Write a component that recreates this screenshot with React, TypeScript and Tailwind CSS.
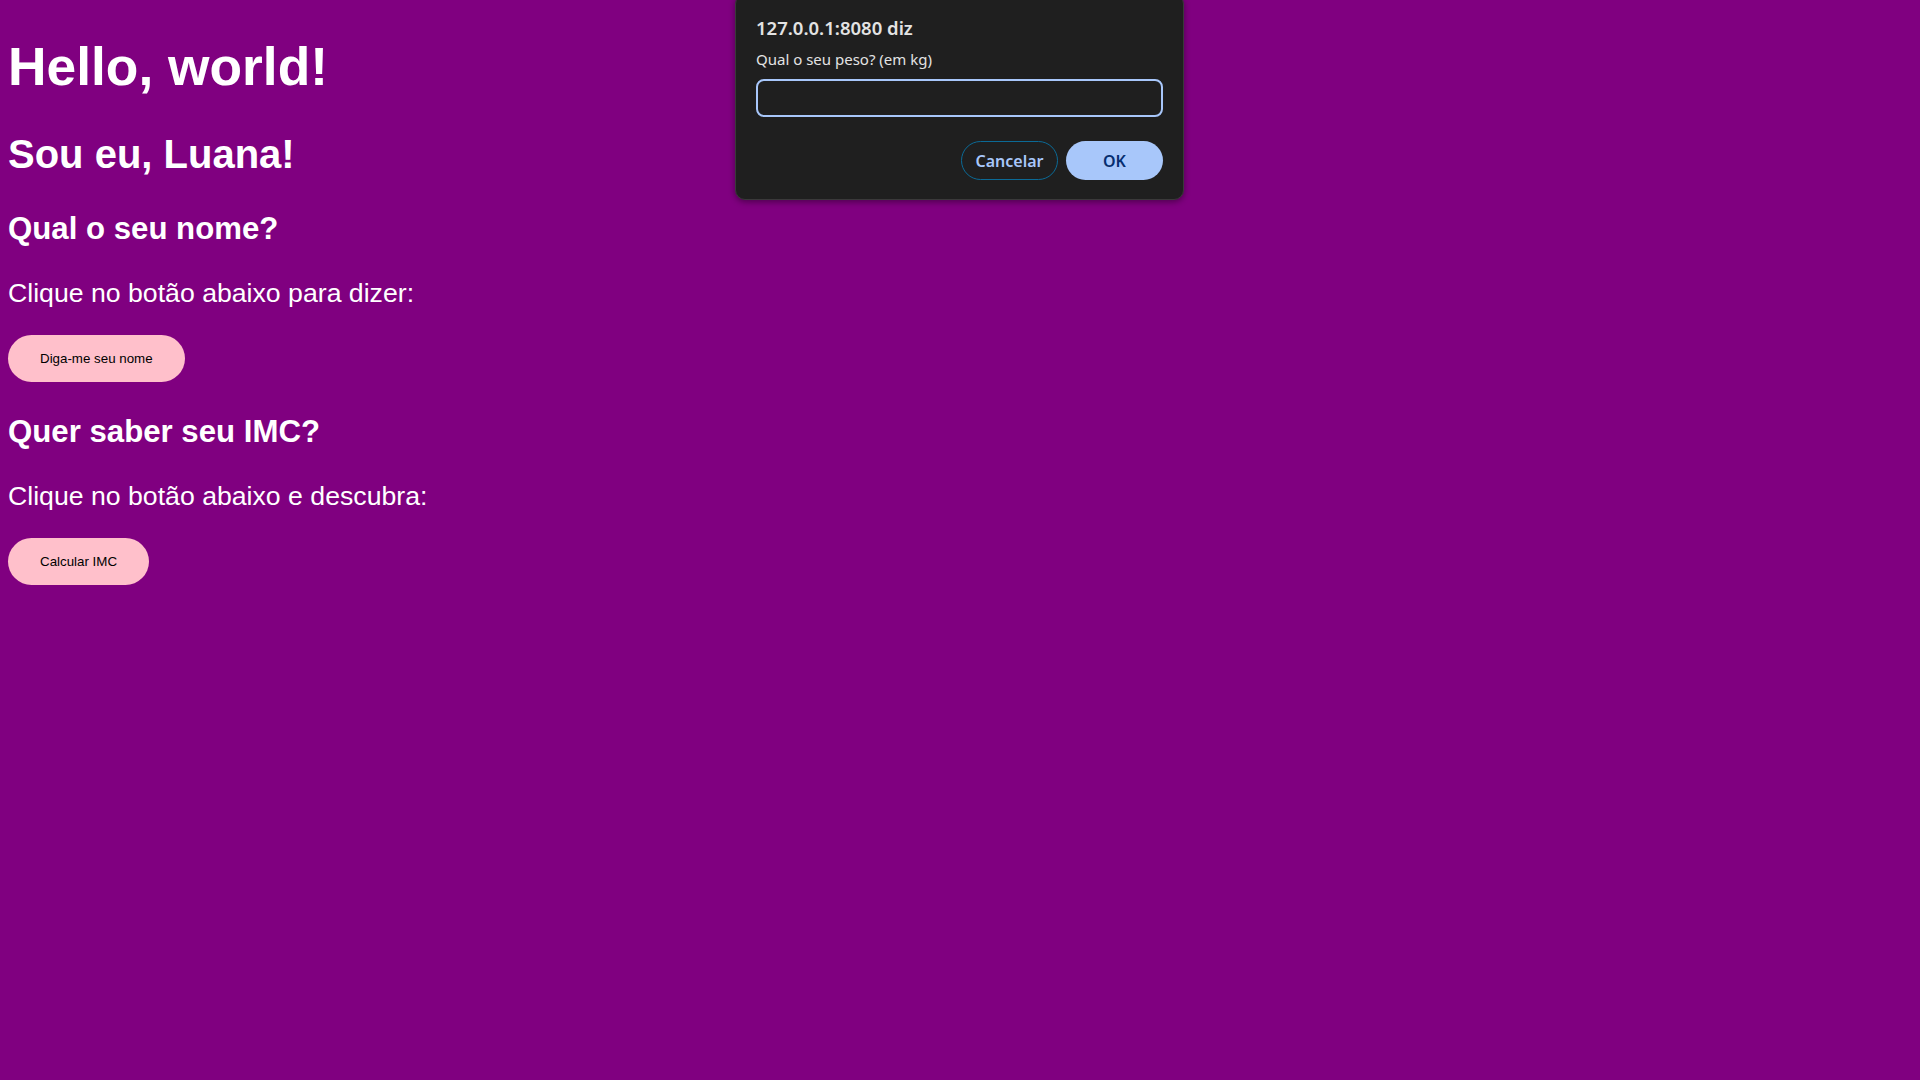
import { FC } from 'react';

const sans = { fontFamily: '"Liberation Sans", Arial, sans-serif' };

const PinkButton: FC<{ label: string }> = ({ label }) => (
  <button className="block rounded-[25px] bg-[#ffc0cb] px-8 py-4 text-[13.33px] leading-[normal] text-black">
    {label}
  </button>
);

const PromptDialog: FC = () => (
  <div
    className="absolute top-[-6px] left-[735px] w-[449px] rounded-[10px] border border-[#3a3a3a] bg-[#1f1f1f] px-5 pt-[21px] pb-[19px] shadow-[0_2px_6px_rgba(0,0,0,0.4)]"
    style={{ fontFamily: '"Noto Sans", "Open Sans", sans-serif' }}
  >
    <div className="text-[18.5px] leading-6 font-semibold text-[#e3e3e3]">127.0.0.1:8080 diz</div>
    <div className="mt-[9px] text-[15px] leading-5 text-[#e3e3e3]">Qual o seu peso? (em kg)</div>
    <div className="mt-[10px] h-[38px] rounded-lg border-2 border-[#a8c7fa] bg-[#1f1f1f]" />
    <div className="mt-6 flex justify-end gap-2">
      <button className="h-[39px] w-[97px] rounded-full border border-[#0b6a96] text-base font-semibold text-[#a8c7fa]">
        Cancelar
      </button>
      <button className="h-[39px] w-[97px] rounded-full bg-[#a8c7fa] text-base font-semibold text-[#062e6f]">
        OK
      </button>
    </div>
  </div>
);

export default function App() {
  return (
    <div className="relative min-h-screen overflow-hidden bg-[#800080] px-2 text-white" style={sans}>
      <h1 className="my-[35.7px] text-[53.33px] leading-[normal] font-bold">Hello, world!</h1>
      <h2 className="my-[33.2px] text-[40px] leading-[normal] font-bold">Sou eu, Luana!</h2>
      <h3 className="my-[31.2px] text-[31.2px] leading-[normal] font-bold">Qual o seu nome?</h3>
      <p className="my-[26.67px] text-[26.67px] leading-[normal]">Clique no botão abaixo para dizer:</p>
      <PinkButton label="Diga-me seu nome" />
      <h3 className="my-[31.2px] text-[31.2px] leading-[normal] font-bold">Quer saber seu IMC?</h3>
      <p className="my-[26.67px] text-[26.67px] leading-[normal]">Clique no botão abaixo e descubra:</p>
      <PinkButton label="Calcular IMC" />
      <PromptDialog />
    </div>
  );
}
